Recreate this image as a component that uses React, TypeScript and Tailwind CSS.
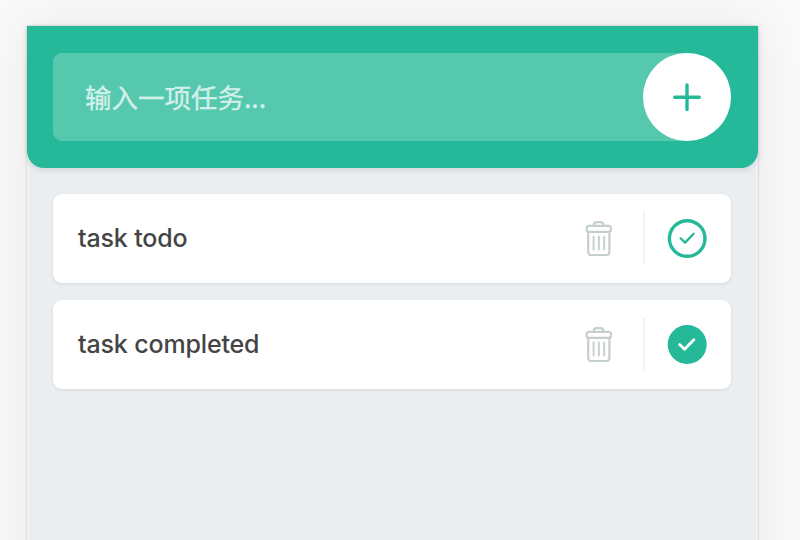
function TrashIcon() {
  return (
    <svg
      width="28"
      height="38"
      viewBox="0 0.9 28 38"
      fill="none"
      stroke="#c5cfcc"
      strokeWidth="2.2"
      strokeLinecap="round"
      strokeLinejoin="round"
    >
      <path d="M8.8 6.8V5.9a2.8 2.8 0 0 1 2.8-2.8h4a2.8 2.8 0 0 1 2.8 2.8v.9" />
      <rect x="1.6" y="6.8" width="24.4" height="6" rx="2.4" />
      <path d="M3.2 13v19.9a3 3 0 0 0 3 3h15.2a3 3 0 0 0 3-3V13" />
      <path d="M8.6 17.4v13M13.9 17.4v13M19.2 17.4v13" strokeWidth="1.9" />
    </svg>
  );
}

function CheckIcon({ done }: { done: boolean }) {
  return (
    <svg width="40" height="40" viewBox="0 0.5 40 40" fill="none">
      {done ? (
        <circle cx="20.2" cy="20" r="19.5" fill="#25b99a" />
      ) : (
        <circle cx="20.2" cy="20" r="17.8" stroke="#25b99a" strokeWidth="3.4" />
      )}
      <path
        d={done ? "M12.6 20.1l4.9 4.7 9.4-9.6" : "M13.6 19.7l4.5 4.4 8.5-8.9"}
        stroke={done ? "#ffffff" : "#25b99a"}
        strokeWidth={done ? 2.8 : 2.3}
        strokeLinecap="round"
        strokeLinejoin="round"
      />
    </svg>
  );
}

function Task({ text, done }: { text: string; done: boolean }) {
  return (
    <li className="flex h-[89px] items-center rounded-[9px] bg-white pr-[23.7px] pl-[25px] shadow-[0_1px_3px_rgba(44,62,80,0.12)]">
      <span className="grow pt-px text-[25px] font-medium tracking-[-0.15px] text-[#444444]">{text}</span>
      <button className="mr-[30px]" aria-label="Delete">
        <TrashIcon />
      </button>
      <span className="mr-[22.5px] h-[53px] w-[2px] bg-[#f0f2f3]" />
      <button aria-label="Complete">
        <CheckIcon done={done} />
      </button>
    </li>
  );
}

export default function App() {
  return (
    <div className="h-[540px] overflow-hidden bg-[#f9f9f9] pt-[26px] pl-[27px] font-['Inter','Noto_Sans_CJK_SC',sans-serif]">
      <main className="h-[700px] w-[731px] bg-[#ebeef0] shadow-[inset_2px_0_0_#f0f1f2,inset_-2px_0_0_#f0f1f2,0_0_2px_rgba(0,0,0,0.22),0_0_42px_rgba(0,0,0,0.07)]">
        <header className="h-[142px] rounded-b-[17px] bg-[#25b99a] py-[27px] pr-[27px] pl-[26px] shadow-[0_2px_6px_rgba(44,62,80,0.15)]">
          <div className="flex h-[88px] items-center rounded-l-[9px] rounded-r-[44px] bg-[#56c8ae] pl-8">
            <input
              className="min-w-0 grow bg-transparent font-['Noto_Sans_CJK_SC',sans-serif] text-[26.5px] text-white outline-none [-webkit-text-stroke:0.35px_#d2f0e9] placeholder:text-[#d2f0e9]"
              placeholder="输入一项任务..."
            />
            <button className="flex size-[88px] items-center justify-center rounded-full bg-white" aria-label="Add">
              <svg width="30" height="30" viewBox="0 0 30 30" fill="none" stroke="#25b99a" strokeWidth="3.4" strokeLinecap="round">
                <path d="M15 2.9v24.6M2.7 15.2h24.6" />
              </svg>
            </button>
          </div>
        </header>
        <ul className="flex flex-col gap-[17px] py-[26px] pr-[27px] pl-[26px]">
          <Task text="task todo" done={false} />
          <Task text="task completed" done />
        </ul>
      </main>
    </div>
  );
}
